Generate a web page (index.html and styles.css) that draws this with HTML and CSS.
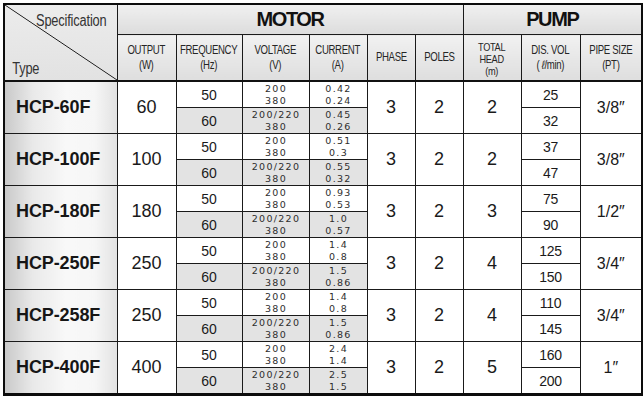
FILE: index.html
```html
<!DOCTYPE html>
<html>
<head>
<meta charset="utf-8">
<link rel="stylesheet" href="styles.css">
</head>
<body>
<table class="spec">
  <colgroup>
    <col class="c-type"><col class="c-out"><col class="c-freq"><col class="c-volt"><col class="c-cur">
    <col class="c-phase"><col class="c-poles"><col class="c-head"><col class="c-dis"><col class="c-pipe">
  </colgroup>
  <thead>
    <tr class="h1">
      <th rowspan="2" class="diag">
        <div class="diag-box"><span class="nar spec-l">Specification</span><span class="nar type-l">Type</span></div>
      </th>
      <th colspan="6" class="grp">MOTOR</th>
      <th colspan="3" class="grp">PUMP</th>
    </tr>
    <tr class="h2">
      <th><div class="nar">OUTPUT<br>(W)</div></th>
      <th><div class="nar">FREQUENCY<br>(Hz)</div></th>
      <th><div class="nar">VOLTAGE<br>(V)</div></th>
      <th><div class="nar">CURRENT<br>(A)</div></th>
      <th><div class="nar">PHASE</div></th>
      <th><div class="nar">POLES</div></th>
      <th class="three"><div class="nar">TOTAL<br>HEAD<br>(m)</div></th>
      <th><div class="nar">DIS. VOL<br>( <i>ℓ</i>/min)</div></th>
      <th><div class="nar">PIPE SIZE<br>(PT)</div></th>
    </tr>
  </thead>
  <tbody>
    <tr class="sub top">
      <td rowspan="2" class="model">HCP-60F</td><td rowspan="2" class="big">60</td>
      <td class="hz">50</td><td class="v">200<br>380</td><td class="v">0.42<br>0.24</td>
      <td rowspan="2" class="big">3</td><td rowspan="2" class="big">2</td><td rowspan="2" class="big">2</td>
      <td class="dv">25</td><td rowspan="2" class="pipe">3/8″</td>
    </tr>
    <tr class="sub bot">
      <td class="hz g">60</td><td class="v g">200/220<br>380</td><td class="v g">0.45<br>0.26</td><td class="dv">32</td>
    </tr>
    <tr class="sub top">
      <td rowspan="2" class="model">HCP-100F</td><td rowspan="2" class="big">100</td>
      <td class="hz">50</td><td class="v">200<br>380</td><td class="v">0.51<br>0.3</td>
      <td rowspan="2" class="big">3</td><td rowspan="2" class="big">2</td><td rowspan="2" class="big">2</td>
      <td class="dv">37</td><td rowspan="2" class="pipe">3/8″</td>
    </tr>
    <tr class="sub bot">
      <td class="hz g">60</td><td class="v g">200/220<br>380</td><td class="v g">0.55<br>0.32</td><td class="dv">47</td>
    </tr>
    <tr class="sub top">
      <td rowspan="2" class="model">HCP-180F</td><td rowspan="2" class="big">180</td>
      <td class="hz">50</td><td class="v">200<br>380</td><td class="v">0.93<br>0.53</td>
      <td rowspan="2" class="big">3</td><td rowspan="2" class="big">2</td><td rowspan="2" class="big">3</td>
      <td class="dv">75</td><td rowspan="2" class="pipe">1/2″</td>
    </tr>
    <tr class="sub bot">
      <td class="hz g">60</td><td class="v g">200/220<br>380</td><td class="v g">1.0<br>0.57</td><td class="dv">90</td>
    </tr>
    <tr class="sub top">
      <td rowspan="2" class="model">HCP-250F</td><td rowspan="2" class="big">250</td>
      <td class="hz">50</td><td class="v">200<br>380</td><td class="v">1.4<br>0.8</td>
      <td rowspan="2" class="big">3</td><td rowspan="2" class="big">2</td><td rowspan="2" class="big">4</td>
      <td class="dv">125</td><td rowspan="2" class="pipe">3/4″</td>
    </tr>
    <tr class="sub bot">
      <td class="hz g">60</td><td class="v g">200/220<br>380</td><td class="v g">1.5<br>0.86</td><td class="dv">150</td>
    </tr>
    <tr class="sub top">
      <td rowspan="2" class="model">HCP-258F</td><td rowspan="2" class="big">250</td>
      <td class="hz">50</td><td class="v">200<br>380</td><td class="v">1.4<br>0.8</td>
      <td rowspan="2" class="big">3</td><td rowspan="2" class="big">2</td><td rowspan="2" class="big">4</td>
      <td class="dv">110</td><td rowspan="2" class="pipe">3/4″</td>
    </tr>
    <tr class="sub bot">
      <td class="hz g">60</td><td class="v g">200/220<br>380</td><td class="v g">1.5<br>0.86</td><td class="dv">145</td>
    </tr>
    <tr class="sub top">
      <td rowspan="2" class="model">HCP-400F</td><td rowspan="2" class="big">400</td>
      <td class="hz">50</td><td class="v">200<br>380</td><td class="v">2.4<br>1.4</td>
      <td rowspan="2" class="big">3</td><td rowspan="2" class="big">2</td><td rowspan="2" class="big">5</td>
      <td class="dv">160</td><td rowspan="2" class="pipe">1″</td>
    </tr>
    <tr class="sub bot">
      <td class="hz g">60</td><td class="v g">200/220<br>380</td><td class="v g">2.5<br>1.5</td><td class="dv">200</td>
    </tr>
  </tbody>
</table>
</body>
</html>
```

FILE: styles.css
```css
html, body {
  margin: 0;
  padding: 0;
  background: #ffffff;
}

body {
  padding: 3px 0 0 3px;
  font-family: "Liberation Sans", Arial, sans-serif;
  color: #151515;
}

.spec {
  border-collapse: collapse;
  table-layout: fixed;
  width: 638px;
  border: 2px solid #0c0c0c;
  border-bottom-width: 3px;
}

.c-type { width: 113px; }
.c-out { width: 59px; }
.c-freq { width: 66px; }
.c-volt { width: 67px; }
.c-cur { width: 58px; }
.c-phase { width: 48px; }
.c-poles { width: 48px; }
.c-head { width: 58px; }
.c-dis { width: 59px; }
.c-pipe { width: 62px; }

.spec th,
.spec td {
  border: 1px solid #1a1a1a;
  padding: 0;
  text-align: center;
  vertical-align: middle;
  overflow: hidden;
}

.spec thead th {
  background: linear-gradient(#f1f1f1, #dedede);
  font-weight: normal;
}

.h1 th {
  height: 29px;
}

.spec th.grp {
  font-size: 20px;
  font-weight: bold;
  color: #111;
  letter-spacing: -1.4px;
  background: linear-gradient(#f0f0f0, #dcdcdc);
}

.h2 th {
  height: 42px;
  font-size: 12px;
  line-height: 15px;
  letter-spacing: -0.4px;
  color: #262626;
  border-bottom: 2px solid #111;
}

.h2 th.three {
  font-size: 11.5px;
  line-height: 12px;
  padding-top: 3px;
}

.nar {
  display: block;
  width: 125%;
  margin-left: -12.5%;
  transform: scaleX(0.8);
}

.spec th.diag {
  border-bottom: 2px solid #111;
  background:
    linear-gradient(to top right, transparent calc(50% - 0.8px), #1a1a1a 50%, transparent calc(50% + 0.8px)),
    linear-gradient(#ececec, #e2e2e2);
}

.diag-box {
  height: 72px;
  display: flex;
  flex-direction: column;
  justify-content: space-between;
  font-size: 16px;
  line-height: 18px;
  letter-spacing: -0.2px;
  color: #333;
}

.diag-box .nar {
  width: auto;
  margin-left: 0;
}

.spec-l {
  align-self: flex-end;
  padding-top: 5px;
  margin-right: -8px;
  transform-origin: left center;
}

.type-l {
  align-self: flex-start;
  padding-bottom: 1px;
  padding-left: 9px;
  transform-origin: left center;
}

.sub td {
  height: 25px;
}

.model {
  text-align: left !important;
  padding-left: 11px !important;
  font-size: 18px;
  font-weight: bold;
  color: #161616;
  letter-spacing: -0.1px;
  background: linear-gradient(to right, #c9c9c9 0%, #e9e9e9 25%, #f8f8f8 55%, #f6f6f6 80%, #e2e2e2 100%);
}

.big {
  font-size: 18px;
  color: #1a1a1a;
}

.pipe {
  font-size: 16px;
  color: #1a1a1a;
}

.hz {
  font-size: 14px;
  color: #1a1a1a;
}

.dv {
  font-size: 14px;
  color: #1a1a1a;
  letter-spacing: -0.3px;
}

.v {
  font-family: "DejaVu Sans", Verdana, sans-serif;
  font-size: 9.5px;
  line-height: 12px;
  letter-spacing: 1.3px;
  color: #2e2e2e;
  padding-left: 1px !important;
}

.g {
  background: #e3e3e3;
}

.bot td.dv {
  background: #ffffff;
}
```
